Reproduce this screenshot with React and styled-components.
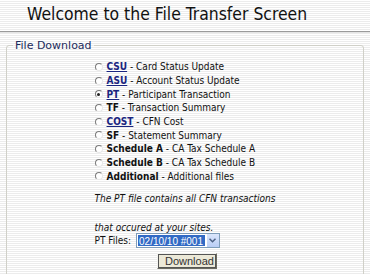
import React from "react";
import styled, { createGlobalStyle } from "styled-components";

const GlobalStyle = createGlobalStyle`
  html, body {
    margin: 0;
    padding: 0;
  }
  body {
    font-family: "DejaVu Sans Condensed", "DejaVu Sans", Verdana, sans-serif;
    font-stretch: condensed;
    color: #111;
    background-color: #fff;
    background-image: repeating-linear-gradient(
      to bottom,
      #ffffff 0px,
      #ffffff 1px,
      #ececec 1px,
      #ececec 2px
    );
    min-height: 274px;
    overflow: hidden;
  }
`

const Title = styled.h1`
  margin: 0;
  padding: 3px 0 0 27px;
  height: 27px;
  font-size: 17.4px;
  font-weight: normal;
  color: #111;
  line-height: 22px;
  white-space: nowrap;
`
const Rule = styled.div`
  margin: 1px 0 0 0;
  height: 1px;
  background: #9a9a9a;
  border-bottom: 1px solid #e4e4e4;
`
const Fieldset = styled.fieldset`
  margin: 6px 6px 0 6px;
  padding: 8px 0 20px 0;
  border: 1px solid #d0d0c8;
  border-radius: 3px;
  min-height: 240px;
`
const Legend = styled.legend`
  margin-left: 6px;
  padding: 0 2px;
  font-family: "DejaVu Sans", Verdana, sans-serif;
  font-stretch: normal;
  font-size: 11px;
  color: #1c2b5c;
`
const Center = styled.div`
  display: flex;
  justify-content: center;
`
const Block = styled.div`
  display: flex;
  flex-direction: column;
  font-size: 10px;
`
const Options = styled.div`
  display: flex;
  flex-direction: column;
`
const Row = styled.label`
  display: flex;
  align-items: center;
  gap: 4px;
  height: 13.7px;
  white-space: nowrap;
`
const Radio = styled.span`
  width: 6px;
  height: 6px;
  border-radius: 50%;
  border: 1px solid;
  border-color: #7a7a7a #e8e8e8 #e8e8e8 #7a7a7a;
  background: #fff;
  display: flex;
  align-items: center;
  justify-content: center;
  &::after {
    content: "";
    width: 3px;
    height: 3px;
    border-radius: 50%;
    background: ${p => (p.$checked ? "#222" : "transparent")};
  }
`
const Code = styled.span`
  font-weight: bold;
  color: ${p => (p.$link ? "#1a2580" : "#111")};
  text-decoration: ${p => (p.$link ? "underline" : "none")};
`
const Note = styled.p`
  margin: ${p => (p.$first ? "8px" : "0")} 0 0 0;
  font-style: italic;
  line-height: 15px;
  white-space: nowrap;
`
const Gap = styled.div`
  height: 14px;
`
const FilesRow = styled.div`
  display: flex;
  align-items: center;
  gap: 5px;
  margin-top: -2px;
`
const Select = styled.div`
  display: flex;
  align-items: stretch;
  height: 13px;
  border: 1px solid #7f9db9;
  background: #fff;
`
const Selected = styled.span`
  background: #316ac5;
  color: #fff;
  font-family: "Liberation Sans", Arial, sans-serif;
  font-stretch: normal;
  font-size: 10px;
  line-height: 11px;
  padding: 1px 2px 0 1px;
  margin: 1px;
`
const Arrow = styled.span`
  width: 12px;
  background: linear-gradient(#dbe6fb, #b9cdf5);
  border-left: 1px solid #fff;
  display: flex;
  align-items: center;
  justify-content: center;
`
const ButtonRow = styled.div`
  display: flex;
  justify-content: center;
  margin-top: 5px;
  padding-left: 4px;
`
const Button = styled.button`
  font-family: "Liberation Sans", Arial, sans-serif;
  font-size: 11px;
  color: #333;
  background: #ece9d8;
  border: 1px solid;
  border-color: #f4f4f0 #6b6b5f #6b6b5f #f4f4f0;
  box-shadow: 0 0 0 1px #555 inset;
  padding: 0 7px;
  height: 16px;
  width: 60px;
`

const options = [
  { code: "CSU", text: "Card Status Update", link: true },
  { code: "ASU", text: "Account Status Update", link: true },
  { code: "PT", text: "Participant Transaction", link: true, checked: true },
  { code: "TF", text: "Transaction Summary" },
  { code: "COST", text: "CFN Cost", link: true },
  { code: "SF", text: "Statement Summary" },
  { code: "Schedule A", text: "CA Tax Schedule A" },
  { code: "Schedule B", text: "CA Tax Schedule B" },
  { code: "Additional", text: "Additional files" },
];

const App = () => {
  return (
    <>
      <GlobalStyle />
      <Title>Welcome to the File Transfer Screen</Title>
      <Rule />
      <Fieldset>
        <Legend>File Download</Legend>
        <Center>
          <Block>
            <Options>
              {options.map(o => (
                <Row key={o.code}>
                  <Radio $checked={o.checked} />
                  <span>
                    <Code $link={o.link}>{o.code}</Code> - {o.text}
                  </span>
                </Row>
              ))}
            </Options>
            <Note $first>The PT file contains all CFN transactions</Note>
            <Gap />
            <Note>that occured at your sites.</Note>
            <FilesRow>
              <span>PT Files:</span>
              <Select>
                <Selected>02/10/10 #001</Selected>
                <Arrow>
                  <svg width="7" height="5" viewBox="0 0 7 5">
                    <path d="M0.5 0.8 L3.5 3.8 L6.5 0.8" fill="none" stroke="#4d6185" strokeWidth="1.5" />
                  </svg>
                </Arrow>
              </Select>
            </FilesRow>
            <ButtonRow>
              <Button>Download</Button>
            </ButtonRow>
          </Block>
        </Center>
      </Fieldset>
    </>
  );
};
export default App;
